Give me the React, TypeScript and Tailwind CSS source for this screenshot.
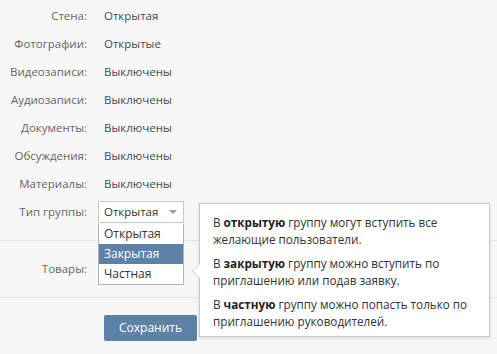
import type { ReactNode } from 'react'

const ROWS: { label: string; value: string }[] = [
  { label: 'Стена:', value: 'Открытая' },
  { label: 'Фотографии:', value: 'Открытые' },
  { label: 'Видеозаписи:', value: 'Выключены' },
  { label: 'Аудиозаписи:', value: 'Выключены' },
  { label: 'Документы:', value: 'Выключены' },
  { label: 'Обсуждения:', value: 'Выключены' },
  { label: 'Материалы:', value: 'Выключены' },
]

const OPTIONS = ['Открытая', 'Закрытая', 'Частная']

function Row({ label, children }: { label: string; children: ReactNode }) {
  return (
    <div className="flex h-7 items-center">
      <span className="w-[87px] shrink-0 text-right text-[#666]">{label}</span>
      <div className="ml-[17px] flex items-center">{children}</div>
    </div>
  )
}

function Hint() {
  return (
    <div className="absolute left-[199px] top-[203px] w-[291px] border border-[#c9c9c9] bg-white px-[13px] pt-[10px] pb-[6px] text-[11.7px] text-[#333] shadow-[0_1px_3px_rgba(0,0,0,0.12)]">
      {/* стрелка */}
      <span className="absolute left-[-8px] top-[59px] h-0 w-0 border-y-[8px] border-r-[8px] border-y-transparent border-r-[#c9c9c9]" />
      <span className="absolute left-[-7px] top-[60px] h-0 w-0 border-y-[7px] border-r-[7px] border-y-transparent border-r-white" />
      <p className="leading-[17px]">
        В <b className="text-[#222]">открытую</b> группу могут вступить все желающие пользователи.
      </p>
      <p className="mt-[7px] leading-[17px]">
        В <b className="text-[#222]">закрытую</b> группу можно вступить по приглашению или подав заявку.
      </p>
      <p className="mt-[7px] leading-[17px]">
        В <b className="text-[#222]">частную</b> группу можно попасть только по приглашению руководителей.
      </p>
    </div>
  )
}

export default function App() {
  return (
    <div className="relative h-[354px] w-[497px] overflow-hidden bg-[#f7f7f7] font-['Open_Sans',sans-serif] text-[11.5px]">
      <div className="pt-[2px]">
        {ROWS.map(r => (
          <Row key={r.label} label={r.label}>
            <span className="text-[#3f4b5a]">{r.value}</span>
          </Row>
        ))}
        <Row label="Тип группы:">
          <div className="ml-[-6px] flex h-[22px] w-[86px] items-center justify-between border border-[#c0cad5] bg-white pl-[5px] pr-[6px] text-[#333]">
            <span>Открытая</span>
            <span className="h-0 w-0 border-x-[4px] border-t-[4px] border-x-transparent border-t-[#999]" />
          </div>
        </Row>
      </div>

      <div className="mt-[14px] border-t border-[#e4e6e9]">
        <div className="flex h-[56px] items-center">
          <span className="w-[87px] text-right text-[#666]">Товары:</span>
        </div>
      </div>

      <div className="border-t border-[#e4e6e9] pl-[104px] pt-[17px]">
        <button className="h-[26px] w-[93px] rounded-[2px] bg-[#5e81a8] text-[12px] text-white">Сохранить</button>
      </div>

      {/* раскрытый список */}
      <div className="absolute left-[98px] top-[224px] w-[86px] border border-t-0 border-[#aab7c5] bg-white text-[12px] text-[#333]">
        {OPTIONS.map(o => (
          <div
            key={o}
            className={`flex h-[20px] items-center pl-[5px] ${o === 'Закрытая' ? 'bg-[#5e81a8] text-white' : ''}`}
          >
            {o}
          </div>
        ))}
      </div>

      <Hint />
    </div>
  )
}
